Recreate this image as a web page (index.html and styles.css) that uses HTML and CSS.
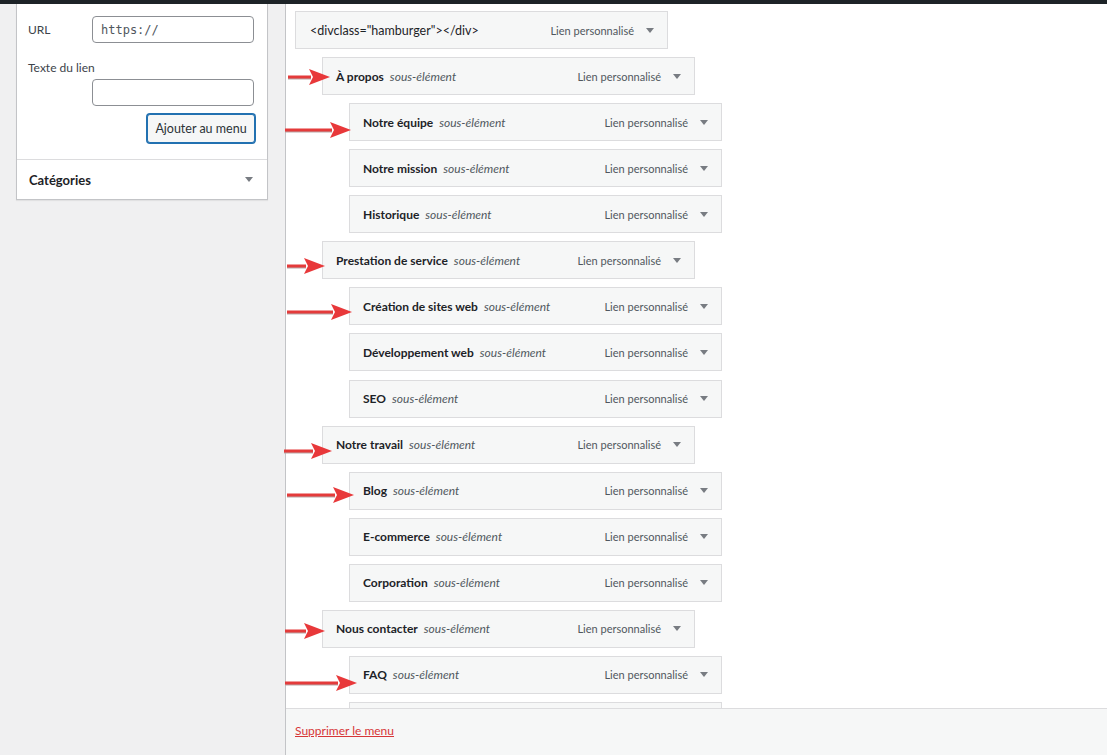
FILE: index.html
```html
<!DOCTYPE html>
<html lang="fr">
<head>
  <meta charset="UTF-8" />
  <meta name="viewport" content="width=device-width, initial-scale=1.0" />
  <title>Menus</title>
  <link rel="stylesheet" href="styles.css">
</head>
<body>
  <div class="topbar"></div>

  <div class="page">
    <div class="sidebar">
      <div class="box">
        <div class="box-body">
          <div class="field">
            <label class="field-label">URL</label>
            <input type="text" class="field-input mono" value="https://" />
          </div>
          <div class="field-stack">
            <label class="field-label">Texte du lien</label>
            <input type="text" class="field-input" />
          </div>
          <div class="box-actions">
            <button class="btn">Ajouter au menu</button>
          </div>
        </div>
        <div class="box-section">
          <span>Catégories</span>
          <span class="caret"></span>
        </div>
      </div>
    </div>

    <div class="main">
      <ul class="menu" id="menu"></ul>
      <div class="footer">
        <a href="#" class="delete-link">Supprimer le menu</a>
      </div>
    </div>
  </div>

  <div class="arrows" id="arrows"></div>

  <script>
    const items = [
      { title: '<divclass="hamburger"></div>', depth: 0, plain: true },
      { title: "À propos", depth: 1 },
      { title: "Notre équipe", depth: 2 },
      { title: "Notre mission", depth: 2 },
      { title: "Historique", depth: 2 },
      { title: "Prestation de service", depth: 1 },
      { title: "Création de sites web", depth: 2 },
      { title: "Développement web", depth: 2 },
      { title: "SEO", depth: 2 },
      { title: "Notre travail", depth: 1 },
      { title: "Blog", depth: 2 },
      { title: "E-commerce", depth: 2 },
      { title: "Corporation", depth: 2 },
      { title: "Nous contacter", depth: 1 },
      { title: "FAQ", depth: 2 },
      { title: "", depth: 2, empty: true }
    ];

    // start x, tip x, y
    const arrows = [
      [288, 330, 77],
      [285, 351, 130],
      [287, 325, 266],
      [287, 352, 312],
      [284, 332, 451],
      [287, 354, 495],
      [285, 325, 631],
      [285, 357, 683]
    ];

    const menu = document.getElementById("menu");
    items.forEach((item) => {
      const li = document.createElement("li");
      li.className = "menu-item depth-" + item.depth;

      const handle = document.createElement("div");
      handle.className = "item-handle";
      li.appendChild(handle);
      menu.appendChild(li);
      if (item.empty) return;

      const title = document.createElement("span");
      title.className = item.plain ? "item-title plain" : "item-title";
      title.textContent = item.title;
      handle.appendChild(title);

      if (!item.plain) {
        const sub = document.createElement("span");
        sub.className = "item-sub";
        sub.textContent = "sous-élément";
        handle.appendChild(sub);
      }

      const type = document.createElement("span");
      type.className = "item-type";
      type.textContent = "Lien personnalisé";
      handle.appendChild(type);

      const caret = document.createElement("span");
      caret.className = "caret";
      handle.appendChild(caret);
    });

    const layer = document.getElementById("arrows");
    arrows.forEach(([x1, x2, y]) => {
      const w = x2 - x1;
      const svg = document.createElementNS("http://www.w3.org/2000/svg", "svg");
      svg.setAttribute("class", "arrow");
      svg.setAttribute("width", w);
      svg.setAttribute("height", 18);
      svg.setAttribute("viewBox", `0 0 ${w} 18`);
      svg.style.left = x1 + "px";
      svg.style.top = (y - 9) + "px";
      const head = w - 21;
      svg.innerHTML =
        `<rect x="0" y="9.5" width="${head + 2}" height="2" fill="#b9a7a7"/>` +
        `<rect x="0" y="7.5" width="${head + 2}" height="3" fill="#e43b3b"/>` +
        `<polygon points="${head},1 ${w},9 ${head},17 ${head + 4},9" fill="#e8383a"/>`;
      layer.appendChild(svg);
    });
  </script>
</body>
</html>
```

FILE: styles.css
```css
* {
  box-sizing: border-box;
}

html,
body {
  margin: 0;
  height: 100%;
  overflow: hidden;
}

body {
  font-family: Lato, "Noto Sans", sans-serif;
  font-size: 11px;
  color: #1d2327;
  background: #f0f0f1;
  display: flex;
  flex-direction: column;
}

.topbar {
  height: 4px;
  background: #1d2327;
  flex-shrink: 0;
}

.page {
  flex: 1;
  display: flex;
  min-height: 0;
}

/* left column */
.sidebar {
  width: 285px;
  flex-shrink: 0;
  padding-left: 16px;
}

.box {
  width: 252px;
  background: #fff;
  border: 1px solid #c3c4c7;
  border-top: none;
  box-shadow: 0 1px 1px rgba(0, 0, 0, 0.06);
}

.box-body {
  padding: 12px 12px 16px 11px;
}

.field {
  display: flex;
  align-items: center;
}

.field-label {
  width: 64px;
  font-size: 12px;
  color: #3c434a;
}

.field-input {
  width: 162px;
  height: 27px;
  border: 1px solid #8c8f94;
  border-radius: 4px;
  padding: 0 8px;
  font-family: Lato, "Noto Sans", sans-serif;
  font-size: 12px;
  color: #2c3338;
  background: #fff;
}

.field-input.mono {
  font-family: "DejaVu Sans Mono", "Liberation Mono", monospace;
  font-size: 12px;
  color: #50575e;
}

.field-stack {
  margin-top: 17px;
  display: flex;
  flex-direction: column;
}

.field-stack .field-label {
  width: auto;
  margin-bottom: 4px;
}

.field-stack .field-input {
  margin-left: 64px;
}

.box-actions {
  display: flex;
  justify-content: flex-end;
  margin-top: 8px;
}

.btn {
  width: 108px;
  height: 29px;
  border: 1px solid #2271b1;
  box-shadow: 0 0 0 1px #2271b1;
  border-radius: 3px;
  background: #f6f7f7;
  color: #2c3338;
  font-family: Lato, "Noto Sans", sans-serif;
  font-size: 12.5px;
  padding: 0;
}

.box-section {
  border-top: 1px solid #dcdcde;
  height: 40px;
  display: flex;
  align-items: center;
  justify-content: space-between;
  padding: 0 14px 0 12px;
  font-size: 13px;
  font-weight: 700;
  color: #1d2327;
}

.caret {
  width: 0;
  height: 0;
  border-left: 4px solid transparent;
  border-right: 4px solid transparent;
  border-top: 5px solid #787c82;
}

/* right column */
.main {
  flex: 1;
  display: flex;
  flex-direction: column;
  background: #fff;
  border-left: 1px solid #c3c4c7;
  min-height: 0;
}

.menu {
  list-style: none;
  margin: 0;
  padding: 7px 0 0 9px;
  flex: 1;
  overflow: hidden;
}

.menu-item {
  margin-bottom: 8.07px;
}

.menu-item.depth-1 {
  padding-left: 27px;
}

.menu-item.depth-2 {
  padding-left: 54px;
}

.item-handle {
  width: 373px;
  height: 38px;
  border: 1px solid #dcdcde;
  background: #f6f7f7;
  display: flex;
  align-items: center;
  padding: 0 13px;
}

.item-title {
  font-weight: 700;
  font-size: 12px;
  color: #1d2327;
}

.item-title.plain {
  font-weight: 400;
  font-size: 12.5px;
  padding-left: 1px;
}

.item-sub {
  font-style: italic;
  font-size: 12px;
  color: #50575e;
  margin-left: 6px;
}

.item-type {
  margin-left: auto;
  margin-right: 12px;
  color: #50575e;
  font-size: 11px;
}

.footer {
  height: 47px;
  flex-shrink: 0;
  border-top: 1px solid #dcdcde;
  background: #f6f7f7;
  display: flex;
  align-items: center;
  padding: 0 0 4px 9px;
}

.delete-link {
  color: #d63638;
  font-size: 12px;
  text-decoration: underline;
}

/* annotation arrows */
.arrows {
  position: absolute;
  inset: 0;
  pointer-events: none;
}

.arrow {
  position: absolute;
}
```
